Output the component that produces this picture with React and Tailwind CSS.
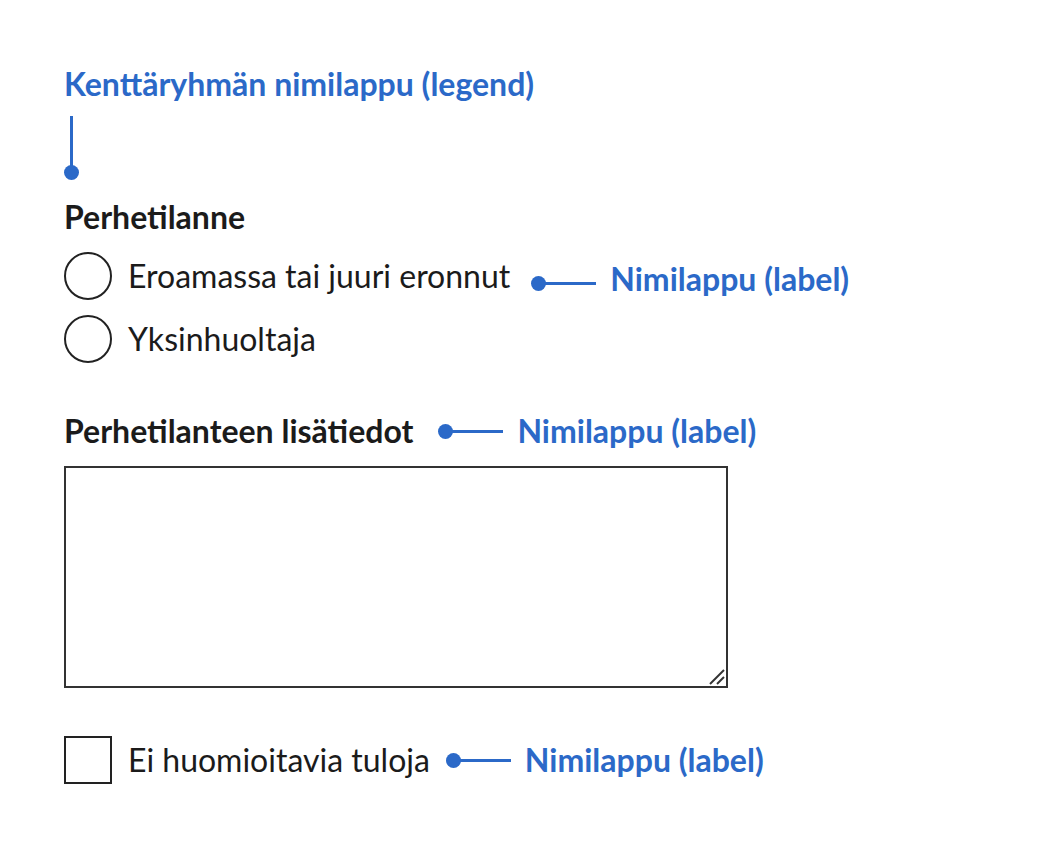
import React from "react";

const BLUE = "bg-[#2b69c8]";

function Connector() {
  return (
    <span className="flex items-center">
      <span className={`block w-[15px] h-[15px] rounded-full ${BLUE}`} />
      <span className={`block w-[52px] h-[3px] ${BLUE} -ml-[2px]`} />
    </span>
  );
}

function Note({ children }) {
  return <span className="font-bold text-[#2b69c8] text-[32px] leading-[40px]">{children}</span>;
}

export default function App() {
  return (
    <div
      className="w-[1050px] h-[848px] bg-white text-[#1b1b1b] pl-[64px] pt-[64px]"
      style={{ fontFamily: "Lato, 'Noto Sans', sans-serif" }}
    >
      <div className="leading-[40px]">
        <Note>Kenttäryhmän nimilappu (legend)</Note>
      </div>
      <div className="flex flex-col items-start mt-[6px]">
        <span className={`block w-[3px] h-[56px] ${BLUE} ml-[6px]`} />
        <span className={`block w-[15px] h-[15px] rounded-full ${BLUE} -mt-[7px]`} />
      </div>

      <fieldset className="mt-[17px]">
        <legend className="font-bold text-[32px] leading-[40px]">Perhetilanne</legend>
        <div className="flex flex-col gap-[15px] mt-[15px]">
          <label className="flex items-center">
            <span className="block w-[48px] h-[48px] rounded-full border-2 border-[#222]" />
            <span className="ml-[16px] text-[32px] leading-[40px]">Eroamassa tai juuri eronnut</span>
            <span className="ml-[21px] mt-[6px] flex items-center">
              <span className="mt-[8px]">
                <Connector />
              </span>
              <span className="ml-[14px]">
                <Note>Nimilappu (label)</Note>
              </span>
            </span>
          </label>
          <label className="flex items-center">
            <span className="block w-[48px] h-[48px] rounded-full border-2 border-[#222]" />
            <span className="ml-[16px] text-[32px] leading-[40px]">Yksinhuoltaja</span>
          </label>
        </div>
      </fieldset>

      <div className="mt-[48px] flex items-center">
        <span className="font-bold text-[32px] leading-[40px]">Perhetilanteen lisätiedot</span>
        <span className="ml-[25px] flex items-center">
          <Connector />
          <span className="ml-[14px]">
            <Note>Nimilappu (label)</Note>
          </span>
        </span>
      </div>
      <div className="relative mt-[15px] w-[664px] h-[222px]">
        <textarea className="block w-full h-full border-2 border-[#333] bg-white outline-none resize-none" />
        <svg
          className="absolute right-[3px] bottom-[3px]"
          width="16"
          height="16"
          viewBox="0 0 16 16"
          fill="none"
          stroke="#333"
          strokeWidth="2"
        >
          <line x1="1" y1="15" x2="15" y2="1" />
          <line x1="8" y1="15" x2="15" y2="8" />
        </svg>
      </div>

      <label className="mt-[48px] flex items-center">
        <span className="block w-[48px] h-[48px] border-2 border-[#222]" />
        <span className="ml-[16px] text-[32px] leading-[40px]">Ei huomioitavia tuloja</span>
        <span className="ml-[16px] flex items-center">
          <Connector />
          <span className="ml-[14px]">
            <Note>Nimilappu (label)</Note>
          </span>
        </span>
      </label>
    </div>
  );
}
